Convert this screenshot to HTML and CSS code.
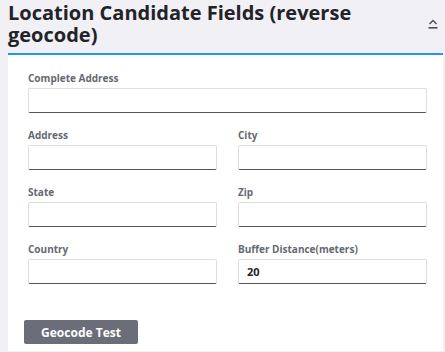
FILE: index.html
```html
<!DOCTYPE html>
<html>
<head>
<meta charset="utf-8">
<link rel="stylesheet" href="styles.css">
</head>
<body>
<div class="page">
  <div class="header">
    <h1 class="title">Location Candidate Fields (reverse geocode)</h1>
    <span class="toggle" aria-label="collapse">
      <svg width="10" height="10" viewBox="0 0 10 10">
        <path d="M1.5 5 L5 1.5 L8.5 5" fill="none" stroke="#4a4d55" stroke-width="1.4"/>
        <rect x="0.5" y="8" width="9" height="1.6" fill="#4a4d55"/>
      </svg>
    </span>
  </div>
  <div class="panel">
    <div class="fields">
      <div class="field full">
        <label class="label">Complete Address</label>
        <input class="input" type="text">
      </div>
      <div class="field">
        <label class="label">Address</label>
        <input class="input" type="text">
      </div>
      <div class="field">
        <label class="label">City</label>
        <input class="input" type="text">
      </div>
      <div class="field">
        <label class="label">State</label>
        <input class="input" type="text">
      </div>
      <div class="field">
        <label class="label">Zip</label>
        <input class="input" type="text">
      </div>
      <div class="field">
        <label class="label">Country</label>
        <input class="input" type="text">
      </div>
      <div class="field">
        <label class="label">Buffer Distance(meters)</label>
        <input class="input" type="text" value="20">
      </div>
    </div>
    <button class="btn">Geocode Test</button>
  </div>
</div>
</body>
</html>
```
FILE: styles.css
```css
html, body {
  margin: 0;
  padding: 0;
  background: #f1f0f5;
}
body {
  font-family: "Open Sans", "Noto Sans", sans-serif;
}
.page {
  padding: 0 2px 1px 8px;
  height: 352px;
  display: flex;
  flex-direction: column;
  box-sizing: border-box;
}
.header {
  display: flex;
  align-items: flex-start;
  justify-content: space-between;
  border-bottom: 2px solid #2196f3;
  padding: 2px 0 7px 0;
}
.title {
  margin: 0;
  font-size: 20px;
  line-height: 22px;
  padding-top: 0;
  font-weight: 700;
  color: #222328;
  max-width: 400px;
}
.toggle {
  display: block;
  margin: 17px 5px 0 0;
  width: 10px;
  height: 10px;
}
.toggle svg { display: block; }
.panel {
  flex: 1;
  background: #fff;
  padding: 16px 16px 7px 20px;
  display: flex;
  flex-direction: column;
}
.fields {
  display: grid;
  grid-template-columns: 1fr 1fr;
  column-gap: 21px;
  row-gap: 15px;
}
.field {
  display: flex;
  flex-direction: column;
}
.field.full {
  grid-column: 1 / 3;
}
.label {
  font-size: 10px;
  line-height: 14px;
  font-weight: 700;
  color: #65696f;
  margin-bottom: 3px;
}
.input {
  box-sizing: border-box;
  height: 25px;
  margin: 0;
  border: 1px solid #dedede;
  border-bottom: 1.5px solid #555;
  border-radius: 2px;
  padding: 0 8px;
  font-family: "Open Sans", sans-serif;
  font-size: 11px;
  font-weight: 700;
  color: #222;
  background: #fff;
}
.btn {
  margin-top: auto;
  margin-left: -4px;
  align-self: flex-start;
  width: 114px;
  height: 24px;
  border: none;
  border-radius: 2px;
  background: #6b6e79;
  color: #fff;
  font-family: "Open Sans", sans-serif;
  font-size: 12px;
  font-weight: 700;
  padding: 0;
}
```
